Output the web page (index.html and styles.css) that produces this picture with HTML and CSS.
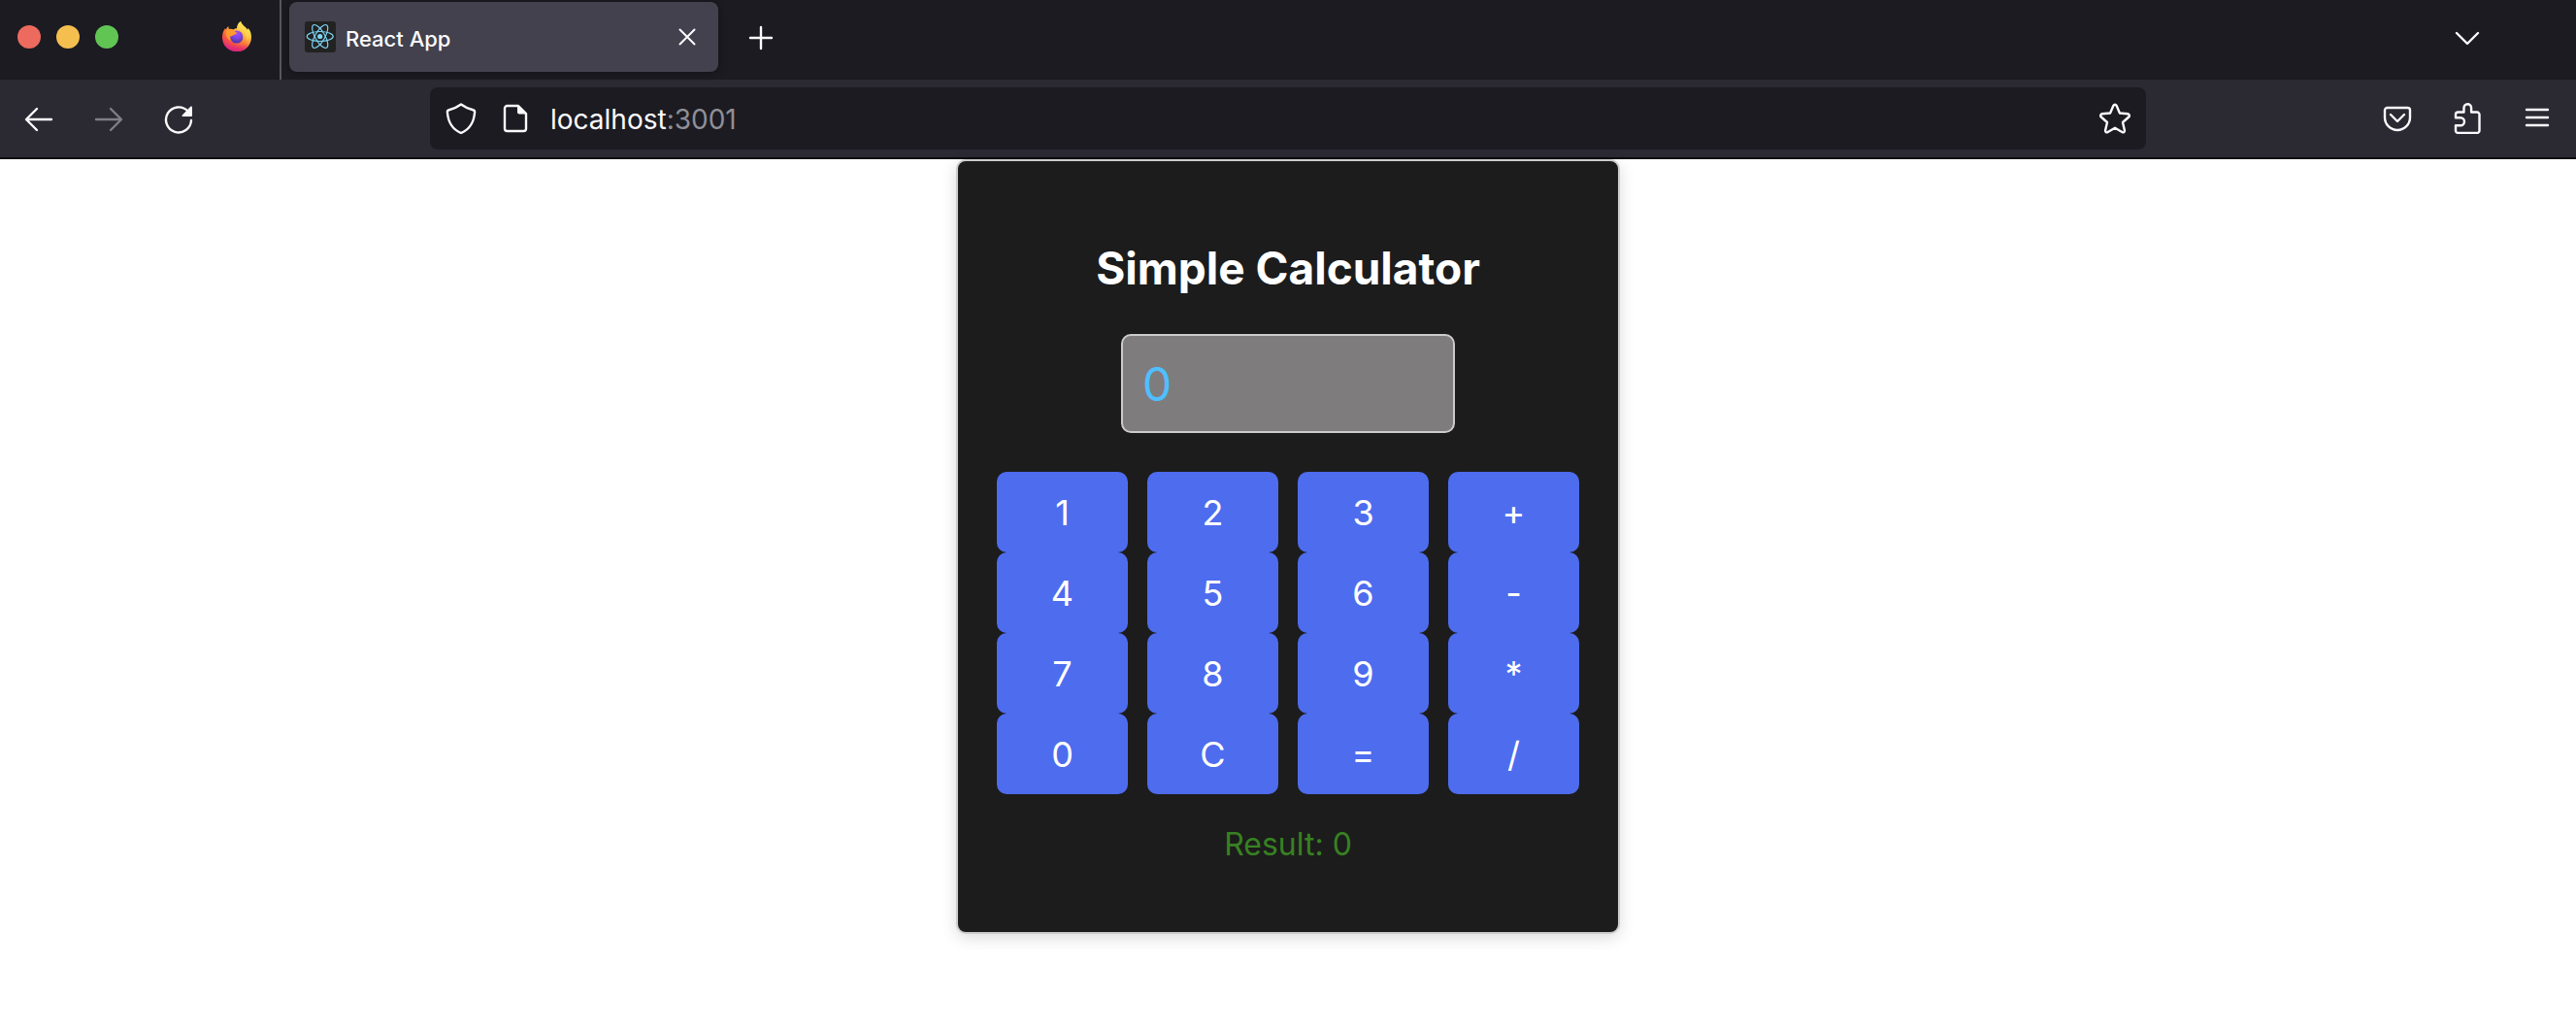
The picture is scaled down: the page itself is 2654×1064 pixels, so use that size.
FILE: index.html
```html
<!DOCTYPE html>
<html lang="en">
<head>
<meta charset="utf-8">
<meta name="viewport" content="width=device-width, initial-scale=1">
<title>React App</title>
<link rel="stylesheet" href="styles.css">
</head>
<body>
<header class="browser">
  <div class="tabs-bar">
    <div class="window-controls">
      <button class="dot dot-close" aria-label="Close window"></button>
      <button class="dot dot-minimize" aria-label="Minimize window"></button>
      <button class="dot dot-zoom" aria-label="Zoom window"></button>
    </div>
    <button class="firefox-view" aria-label="Firefox View">
      <svg class="icon" viewBox="0 0 32 32">
        <defs>
          <linearGradient id="flame" x1="0.8" y1="0.1" x2="0.25" y2="0.95">
            <stop offset="0" stop-color="#fff36b"/>
            <stop offset="0.3" stop-color="#ffc23f"/>
            <stop offset="0.55" stop-color="#fb7a3d"/>
            <stop offset="0.8" stop-color="#f5484c"/>
            <stop offset="1" stop-color="#d92a83"/>
          </linearGradient>
          <linearGradient id="ember" x1="0" y1="0" x2="0" y2="1">
            <stop offset="0.55" stop-color="#e3257d" stop-opacity="0"/>
            <stop offset="1" stop-color="#d6247f"/>
          </linearGradient>
          <radialGradient id="globe" cx="0.55" cy="0.2" r="0.85">
            <stop offset="0" stop-color="#a64bfa"/>
            <stop offset="0.5" stop-color="#7a45e0"/>
            <stop offset="1" stop-color="#44339c"/>
          </radialGradient>
        </defs>
        <path fill="url(#flame)" d="M20 0c.8 3 3 4.500 5 6.300 1 .9 1.400 1.900 1.700 2.900l.9-2.200C30 9.500 31 13 31 16.300 31 25 24.300 31 16 31S1 25 1 16.400C1 12.500 2.300 9 4 7.200l.6 1.400C5.300 7 6.300 5.800 7.500 5c-.2 1.400.1 2.300.5 3 1.400-.4 3.200-.2 4.500.5 1-.9 2.200-1.300 3.500-1.200C16 4 17.500 1.500 20 0z"/>
        <path fill="url(#ember)" d="M1 14h30v2.300C31 25 24.300 31 16 31S1 25 1 16.400z"/>
        <path fill="#ffd84d" opacity=".75" d="M20 0c.8 3 3 4.500 5 6.300C29 10 29 16 26.500 20c.3-5-1.500-8-4.500-10-3-1.500-4-5-2-10z"/>
        <circle cx="15.800" cy="16" r="6.600" fill="url(#globe)"/>
        <path fill="#ff9a2f" d="M5 10c2.500-2 5.500-1.800 8-.8 1 .9 1.600 1.900 2.700 2.200.5.200.3 1-.5 1.500-1.200.8-2.300.8-3.200 1.700-.8.800-2 1-3.200.6 0 2 .6 3.600 1.600 4.700C6 19 4 14 5 10z"/>
      </svg>
    </button>
    <div class="tab">
      <svg class="icon" viewBox="0 0 32 32">
        <rect width="32" height="32" rx="3" fill="#222"/>
        <g fill="none" stroke="#7bd5f5" stroke-width="1.200">
          <ellipse cx="15.700" cy="15.500" rx="13.500" ry="5"/>
          <ellipse cx="15.700" cy="15.500" rx="13.500" ry="5" transform="rotate(60 15.700 15.500)"/>
          <ellipse cx="15.700" cy="15.500" rx="13.500" ry="5" transform="rotate(120 15.700 15.500)"/>
        </g>
        <circle cx="15.700" cy="15.500" r="2.600" fill="#7bd5f5"/>
      </svg>
      <span class="tab-title">React App</span>
      <button class="tab-close" aria-label="Close tab">
        <svg class="icon" viewBox="0 0 32 32"><path class="line thin" d="M8.500 8.500l15 15M23.500 8.500l-15 15"/></svg>
      </button>
    </div>
    <button class="tool-button new-tab" aria-label="New tab">
      <svg class="icon" viewBox="0 0 32 32"><path class="line" d="M16 5v22M5 16h22"/></svg>
    </button>
    <button class="tool-button all-tabs" aria-label="List all tabs">
      <svg class="icon" viewBox="0 0 32 32"><path class="line" d="M5 11l11 11 11-11"/></svg>
    </button>
  </div>
  <div class="toolbar">
    <nav class="tools">
      <button class="tool-button" aria-label="Back">
        <svg class="icon" viewBox="0 0 32 32"><path class="line" d="M29 17H3.500M14 6l-11 11 11 11"/></svg>
      </button>
      <button class="tool-button" aria-label="Forward" disabled>
        <svg class="icon" viewBox="0 0 32 32"><path class="line" d="M3 17h25.500M18 6l11 11-11 11"/></svg>
      </button>
      <button class="tool-button" aria-label="Reload">
        <svg class="icon" viewBox="0 0 32 32"><path class="line" d="M29 18a13 13 0 1 1-3.500-9.500"/><path fill="#fbfbfe" d="M30 4.500V13a1 1 0 0 1-1 1h-8.500c-.9 0-1.300-1-.7-1.600l8.500-8.600c.6-.6 1.700-.2 1.700.7z"/></svg>
      </button>
    </nav>
    <div class="url-bar">
      <div class="site-identity">
        <svg class="icon" viewBox="0 0 32 32"><path class="line" d="M16 1.500c4 3 8.500 4.800 13 6 1 .3 1.200 1 1.100 2C29.500 18 25.500 27 16 31 6.500 27 2.500 18 1.900 9.500c-.1-1 .1-1.700 1.100-2 4.500-1.200 9-3 13-6z"/></svg>
        <svg class="icon" viewBox="0 0 32 32"><path class="line" d="M8 3h11l8 8v15.500a2.500 2.500 0 0 1-2.500 2.500h-17A2.500 2.500 0 0 1 5 26.500V5.500A2.500 2.500 0 0 1 7.500 3z"/><path fill="#fbfbfe" d="M18 2l10 9.500H20a2 2 0 0 1-2-2z"/></svg>
      </div>
      <a class="url" href="#calculator">localhost<span class="port">:3001</span></a>
      <button class="bookmark" aria-label="Bookmark this page">
        <svg class="icon" viewBox="0 0 32 32"><path class="line" d="M14.400 2.800c.7-1.500 2.500-1.500 3.200 0l3.300 7.700 8.300.8c1.700.2 2.300 2 1 3.200l-6.200 5.500 1.900 8.200c.3 1.700-1.100 2.700-2.600 1.800L16 25.700 8.700 30c-1.500.9-2.900-.1-2.600-1.800L8 20l-6.200-5.500c-1.300-1.200-.7-3 1-3.200l8.300-.8z"/></svg>
      </button>
    </div>
    <nav class="tools tools-end">
      <button class="tool-button" aria-label="Save to Pocket">
        <svg class="icon" viewBox="0 0 32 32"><path class="line" d="M5.500 5h21A2.500 2.500 0 0 1 29 7.500V15a13 13 0 0 1-26 0V7.500A2.500 2.500 0 0 1 5.500 5zM9 12l7 7 7-7"/></svg>
      </button>
      <button class="tool-button" aria-label="Extensions">
        <svg class="icon" viewBox="0 0 32 32"><path class="line" d="M12.500 9.500V5a3.800 3.800 0 0 1 7.600 0v4.500H26a2.500 2.500 0 0 1 2.500 2.500v16.500A2.500 2.500 0 0 1 26 31H6.500A2.500 2.500 0 0 1 4 28.500V23.200h5a4 4 0 0 0 0-8H4V12a2.500 2.500 0 0 1 2.500-2.500z"/></svg>
      </button>
      <button class="tool-button" aria-label="Open application menu">
        <svg class="icon" viewBox="0 0 32 32"><path class="line" d="M5 7h22M5 15h22M5 23h22"/></svg>
      </button>
    </nav>
  </div>
</header>
<main class="page">
  <section class="calculator" id="calculator">
    <h1 class="title">Simple Calculator</h1>
    <input class="display" type="text" aria-label="Expression" placeholder="0">
    <div class="keys">
      <button class="key">1</button>
      <button class="key">2</button>
      <button class="key">3</button>
      <button class="key">+</button>
      <button class="key">4</button>
      <button class="key">5</button>
      <button class="key">6</button>
      <button class="key">-</button>
      <button class="key">7</button>
      <button class="key">8</button>
      <button class="key">9</button>
      <button class="key">*</button>
      <button class="key">0</button>
      <button class="key">C</button>
      <button class="key">=</button>
      <button class="key">/</button>
    </div>
    <p class="result">Result: 0</p>
  </section>
</main>
</body>
</html>
```
FILE: styles.css
```css
* {
  box-sizing: border-box;
}

body {
  margin: 0;
  background: #fff;
  font-family: Inter, "Liberation Sans", sans-serif;
}

button {
  border: 0;
  padding: 0;
  background: none;
  font-family: inherit;
}

.icon {
  display: block;
  flex: none;
  width: 32px;
  height: 32px;
}

.line {
  fill: none;
  stroke: #fbfbfe;
  stroke-width: 2.400;
  stroke-linecap: round;
  stroke-linejoin: round;
}

.thin {
  stroke-width: 2;
}

/* Browser chrome */
.browser {
  color: #fbfbfe;
  border-bottom: 2px solid #0c0c0d;
}

.tabs-bar {
  display: flex;
  height: 82px;
  padding-right: 76px;
  background: #1c1b22;
}

.window-controls {
  display: flex;
  gap: 16px;
  padding: 26px 18px;
}

.dot {
  width: 24px;
  height: 24px;
  border-radius: 50%;
}

.dot-close {
  background: #ed6a5e;
}

.dot-minimize {
  background: #f5bf4f;
}

.dot-zoom {
  background: #61c554;
}

.firefox-view {
  margin-left: 88px;
  padding: 0 28px 6px 0;
  border-right: 2px solid #57565c;
}

.tab {
  display: flex;
  align-items: center;
  width: 442px;
  margin: 2px 8px 8px;
  padding: 0 16px;
  border-radius: 8px;
  background: #42414d;
  box-shadow: 0 0 8px rgba(0, 0, 0, 0.4);
}

.tab-title {
  flex: 1;
  margin-left: 10px;
  padding-top: 4px;
  font-size: 22px;
  font-weight: 500;
  line-height: 28px;
}

.tool-button {
  display: flex;
  align-items: center;
  justify-content: center;
  width: 72px;
}

.new-tab {
  padding-bottom: 4px;
}

.all-tabs {
  margin-left: auto;
  padding-bottom: 4px;
}

.toolbar {
  display: grid;
  grid-template-columns: minmax(224px, 443px) minmax(0, 1fr) minmax(224px, 443px);
  height: 80px;
  background: #2b2a33;
}

.tools {
  display: flex;
  padding: 0 4px;
}

.tools-end {
  justify-content: flex-end;
}

.tool-button:disabled {
  opacity: 0.4;
}

.url-bar {
  display: flex;
  align-items: center;
  gap: 20px;
  margin: 8px 0;
  padding: 0 16px;
  border-radius: 8px;
  background: #1c1b22;
}

.site-identity {
  display: flex;
  gap: 24px;
}

.url {
  flex: 1;
  padding-top: 2px;
  color: #fbfbfe;
  font-size: 28px;
  line-height: 32px;
  text-decoration: none;
}

.port {
  color: #8f8f96;
}

/* Calculator */
.page {
  display: flex;
  justify-content: center;
  padding-bottom: 40px;
}

.calculator {
  display: flex;
  flex-direction: column;
  align-items: center;
  width: 684px;
  padding: 82px 40px 70px;
  border: 2px solid #ccc;
  border-radius: 10px;
  background: #1c1c1c;
  box-shadow: 0 4px 16px rgba(0, 0, 0, 0.14);
}

.title {
  margin: 0 0 40px;
  color: #fff;
  font-size: 46px;
  font-weight: 700;
  line-height: 56px;
}

.display {
  width: 344px;
  height: 102px;
  padding: 0 20px;
  border: 2px solid #ccc;
  border-radius: 10px;
  background: #7f7c7d;
  color: #4fbfff;
  font-family: inherit;
  font-size: 48px;
}

.display::placeholder {
  color: #4fbfff;
  opacity: 1;
}

.keys {
  display: grid;
  grid-template-columns: repeat(4, 1fr);
  column-gap: 20px;
  width: 100%;
  margin: 40px 0 32px;
}

.key {
  height: 83px;
  border-radius: 10px;
  background: #4e6cee;
  color: #fff;
  font-size: 36px;
}

.result {
  margin: 0;
  color: #378122;
  font-size: 32px;
  line-height: 40px;
}
```
